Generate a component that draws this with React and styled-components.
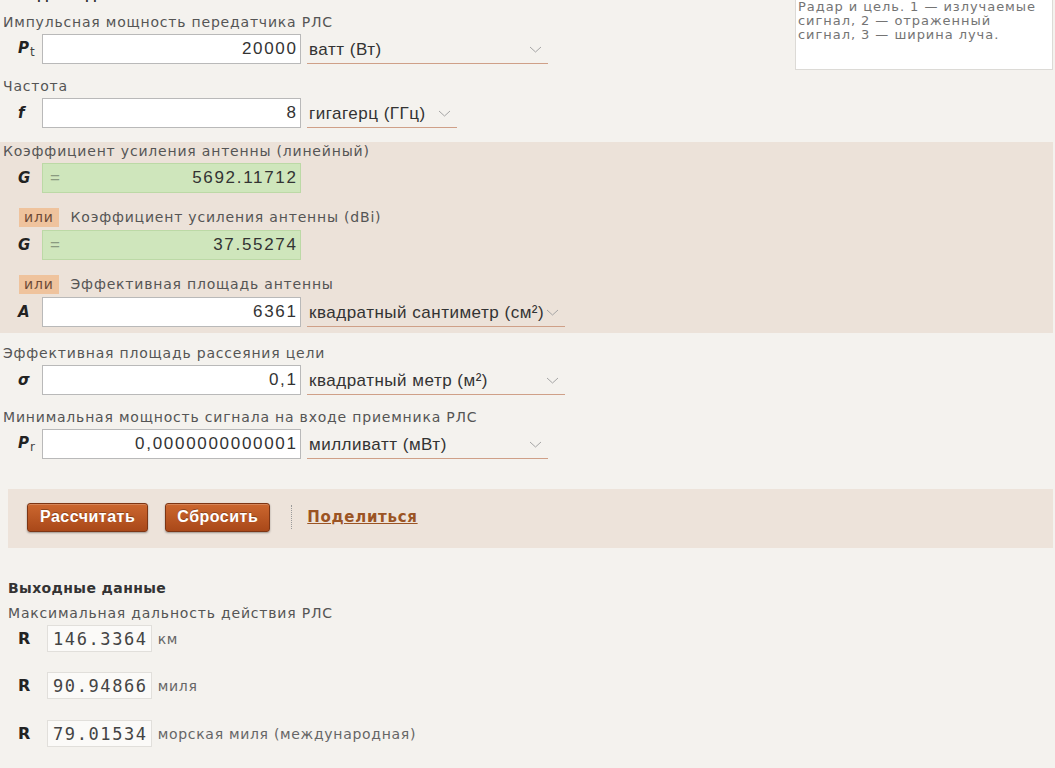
import styled, { createGlobalStyle } from 'styled-components';

const GlobalStyle = createGlobalStyle`
  body {
    margin: 0;
    background: #f4f2ee;
    font-family: "DejaVu Sans", Verdana, sans-serif;
    color: #555;
  }
`;

const Page = styled.div`
  width: 1053px;
  height: 768px;
  overflow: hidden;
`;

const CutTitle = styled.div`
  margin: -14px 0 0 8px;
  font-weight: bold;
  font-size: 14px;
  line-height: 18px;
  color: #333;
`;

const Figure = styled.div`
  float: right;
  width: 258px;
  box-sizing: border-box;
  margin-top: -22px;
  padding: 17px 4px 27px 2px;
  background: #fff;
  border: 1px solid #dcdad6;
  font-size: 13px;
  letter-spacing: 0.95px;
  line-height: 14px;
  color: #747474;
`;

const Fields = styled.div`
  padding-top: 9px;
`;

const Field = styled.div`
  margin-bottom: ${(p) => p.$mb ?? 13}px;
`;

const Label = styled.div`
  font-size: 14px;
  letter-spacing: 0.8px;
  line-height: 18px;
  padding-left: 3px;
  color: #555;
`;

const Row = styled.div`
  display: flex;
  align-items: center;
  height: 30px;
  margin-top: ${(p) => p.$mt ?? 3}px;
`;

const Symbol = styled.div`
  width: 42px;
  box-sizing: border-box;
  padding-left: 18px;
  font-family: "DejaVu Sans", sans-serif;
  font-weight: bold;
  font-style: italic;
  font-size: 15px;
  color: #222;

  sub {
    font-style: normal;
    font-weight: normal;
    font-size: 12px;
    color: #444;
    vertical-align: -3px;
    margin-left: 1px;
  }
`;

const NumBox = styled.div`
  width: 259px;
  height: 30px;
  box-sizing: border-box;
  display: flex;
  align-items: center;
  border: 1px solid ${(p) => (p.$calc ? '#bcd9a6' : '#b9b9b9')};
  background: ${(p) => (p.$calc ? '#cfe6bc' : '#fff')};
  padding: 0 4px 0 7px;
  font-family: "Liberation Sans", Arial, sans-serif;
  font-size: 17px;
  color: #333;
`;

const Eq = styled.span`
  color: #8a9a80;
  font-size: 17px;
`;

const NumValue = styled.span`
  flex: 1;
  text-align: right;
  letter-spacing: 1.7px;
  margin-right: -1.7px;
`;

const UnitSelect = styled.div`
  width: ${(p) => p.$w}px;
  height: 30px;
  box-sizing: border-box;
  margin-left: 6px;
  padding: 2px 6px 0 2px;
  display: flex;
  align-items: center;
  justify-content: space-between;
  border-bottom: 1px solid #cfa088;
  font-family: "Liberation Sans", Arial, sans-serif;
  font-size: 17px;
  letter-spacing: 0.5px;
  color: #333;
`;

const Beige = styled.div`
  background: #ece2d9;
  padding: 0 0 6px;
  margin-bottom: 11px;
`;

const OrLine = styled.div`
  display: flex;
  align-items: center;
  height: 20px;
  margin-top: 14px;
`;

const OrBadge = styled.span`
  margin-left: 19px;
  padding: 0 5px;
  height: 19px;
  line-height: 19px;
  background: #efc39d;
  color: #6c4a37;
  font-size: 14px;
  letter-spacing: 0.8px;
`;

const OrLabel = styled(Label)`
  padding-left: 12px;
`;

const ButtonBar = styled.div`
  display: flex;
  align-items: center;
  height: 59px;
  margin: 30px 0 0 8px;
  padding: 0 0 3px 19px;
  box-sizing: border-box;
  background: #ede3da;
`;

const Button = styled.button`
  height: 29px;
  padding: 0 ${(p) => p.$px}px;
  margin-right: 17px;
  border: 1px solid #7d3514;
  border-radius: 3px;
  background: linear-gradient(#cc672f, #a94819);
  box-shadow: 0 1px 2px rgba(0, 0, 0, 0.35), inset 0 1px 0 rgba(255, 255, 255, 0.2);
  color: #fff;
  font-family: "Liberation Sans", Arial, sans-serif;
  font-weight: bold;
  font-size: 16px;
  letter-spacing: 0.5px;
  text-shadow: 0 -1px 0 rgba(0, 0, 0, 0.3);
  cursor: pointer;
`;

const Divider = styled.span`
  height: 24px;
  border-left: 1px dotted #9a9a9a;
  margin: 0 15px 0 4px;
`;

const ShareLink = styled.a`
  color: #9b5424;
  font-weight: bold;
  font-size: 15px;
  letter-spacing: 0.7px;
  text-decoration: underline;
  cursor: pointer;
`;

const Output = styled.div`
  margin: 31px 0 0 8px;
`;

const OutTitle = styled.div`
  font-weight: bold;
  font-size: 14px;
  letter-spacing: 0.4px;
  line-height: 18px;
  color: #333;
`;

const OutLabel = styled(Label)`
  padding-left: 0;
  margin-top: 7px;
`;

const ResultRow = styled.div`
  display: flex;
  align-items: center;
  margin-top: ${(p) => p.$mt}px;
`;

const RSym = styled.span`
  width: 39px;
  box-sizing: border-box;
  padding-left: 10px;
  font-weight: bold;
  font-size: 16px;
  color: #222;
`;

const ValueBox = styled.span`
  height: 27px;
  box-sizing: border-box;
  display: flex;
  align-items: center;
  padding: 0 3px 0 5px;
  border: 1px solid #e1dfdb;
  background: #fbfaf8;
  font-family: "DejaVu Sans Mono", "Liberation Mono", monospace;
  font-size: 17px;
  letter-spacing: 1.6px;
  color: #444;
`;

const Unit = styled.span`
  margin-left: 6px;
  font-size: 14px;
  letter-spacing: 0.7px;
  color: #666;
`;

function Chevron() {
  return (
    <svg width="13" height="7" viewBox="0 0 13 7">
      <path d="M1 1 L6.5 6 L12 1" fill="none" stroke="#a5a5a5" strokeWidth="1" />
    </svg>
  );
}

function InputRow({ symbol, sub, value, unit, w, calc, mt }) {
  return (
    <Row $mt={mt}>
      <Symbol>
        {symbol}
        {sub && <sub>{sub}</sub>}
      </Symbol>
      <NumBox $calc={calc}>
        {calc && <Eq>=</Eq>}
        <NumValue>{value}</NumValue>
      </NumBox>
      {unit && (
        <UnitSelect $w={w}>
          <span>{unit}</span>
          <Chevron />
        </UnitSelect>
      )}
    </Row>
  );
}

const results = [
  { value: '146.3364', unit: 'км', mt: 3 },
  { value: '90.94866', unit: 'миля', mt: 20 },
  { value: '79.01534', unit: 'морская миля (международная)', mt: 21 },
];

export default function App() {
  return (
    <Page>
      <GlobalStyle />
      <CutTitle>Входные данные</CutTitle>
      <Figure>
        Радар и цель. 1 — излучаемые
        <br />
        сигнал, 2 — отраженный
        <br />
        сигнал, 3 — ширина луча.
      </Figure>
      <Fields>
        <Field>
          <Label>Импульсная мощность передатчика РЛС</Label>
          <InputRow symbol="P" sub="t" value="20000" unit="ватт (Вт)" w={241} />
        </Field>
        <Field $mb={14}>
          <Label>Частота</Label>
          <InputRow symbol="f" value="8" unit="гигагерц (ГГц)" w={150} />
        </Field>
        <Beige>
          <Label>Коэффициент усиления антенны (линейный)</Label>
          <InputRow symbol="G" value="5692.11712" calc mt={3} />
          <OrLine>
            <OrBadge>или</OrBadge>
            <OrLabel>Коэффициент усиления антенны (dBi)</OrLabel>
          </OrLine>
          <InputRow symbol="G" value="37.55274" calc mt={3} />
          <OrLine>
            <OrBadge>или</OrBadge>
            <OrLabel>Эффективная площадь антенны</OrLabel>
          </OrLine>
          <InputRow symbol="A" value="6361" unit="квадратный сантиметр (см²)" w={258} mt={3} />
        </Beige>
        <Field>
          <Label>Эффективная площадь рассеяния цели</Label>
          <InputRow symbol="σ" value="0,1" unit="квадратный метр (м²)" w={258} />
        </Field>
        <Field $mb={0}>
          <Label>Минимальная мощность сигнала на входе приемника РЛС</Label>
          <InputRow symbol="P" sub="r" value="0,0000000000001" unit="милливатт (мВт)" w={241} />
        </Field>
      </Fields>
      <ButtonBar>
        <Button $px={12}>Рассчитать</Button>
        <Button $px={11}>Сбросить</Button>
        <Divider />
        <ShareLink>Поделиться</ShareLink>
      </ButtonBar>
      <Output>
        <OutTitle>Выходные данные</OutTitle>
        <OutLabel>Максимальная дальность действия РЛС</OutLabel>
        {results.map((r) => (
          <ResultRow key={r.unit} $mt={r.mt}>
            <RSym>R</RSym>
            <ValueBox>{r.value}</ValueBox>
            <Unit>{r.unit}</Unit>
          </ResultRow>
        ))}
      </Output>
    </Page>
  );
}
